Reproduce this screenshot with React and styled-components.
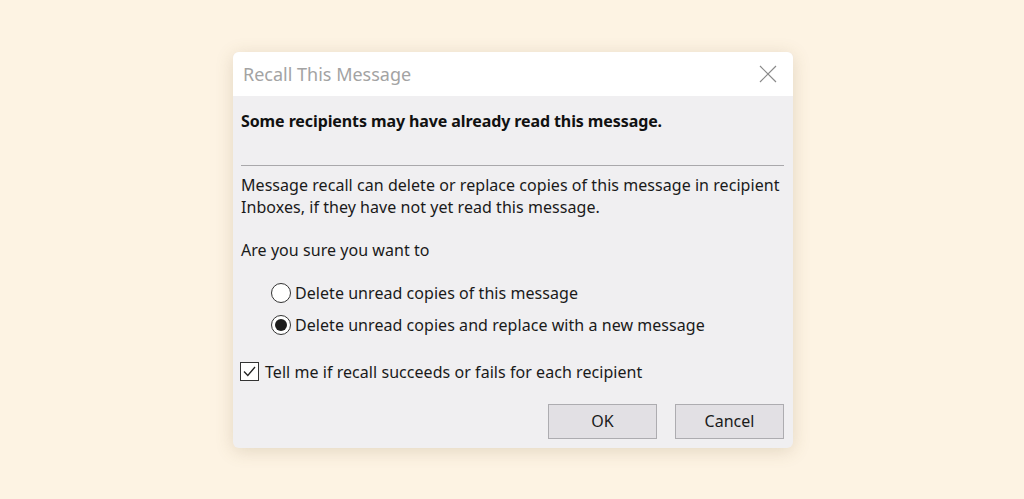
import styled, { createGlobalStyle } from "styled-components";

const GlobalStyle = createGlobalStyle`
  html, body {
    margin: 0;
    padding: 0;
    background: #fdf3e3;
  }
  * {
    box-sizing: border-box;
  }
`;

const Page = styled.div`
  width: 100%;
  height: 100vh;
  display: flex;
  align-items: center;
  justify-content: center;
  font-family: "Noto Sans", "Open Sans", sans-serif;
  color: #1a1a1a;
`;

const Dialog = styled.div`
  width: 560px;
  height: 396px;
  margin-left: 2px;
  border-radius: 6px;
  background: #f0eff1;
  box-shadow: 0 3px 18px rgba(120, 100, 60, 0.2);
  overflow: hidden;
  display: flex;
  flex-direction: column;
`;

const TitleBar = styled.div`
  height: 44px;
  background: #ffffff;
  display: flex;
  align-items: center;
  justify-content: space-between;
  padding: 0 16px 0 10px;
`;

const Title = styled.div`
  font-size: 18px;
  color: #a3a3a3;
`;

const CloseButton = styled.button`
  border: none;
  background: none;
  padding: 0;
  width: 18px;
  height: 18px;
  display: flex;
  cursor: pointer;
`;

const Body = styled.div`
  flex: 1;
  padding: 14px 9px 9px 8px;
  display: flex;
  flex-direction: column;
  font-size: 16px;
  letter-spacing: 0.05px;
`;

const Heading = styled.div`
  font-weight: 700;
  font-size: 16px;
  line-height: 22px;
  letter-spacing: -0.1px;
  color: #111;
`;

const Rule = styled.div`
  height: 1px;
  background: #a9a8ab;
  margin: 33px 0 8px;
`;

const Text = styled.p`
  margin: 0 0 ${(p) => p.$gap || 0}px;
  line-height: 22px;
`;

const Options = styled.div`
  display: flex;
  flex-direction: column;
  gap: 10px;
  padding-left: 30px;
  margin-top: 21px;
`;

const OptionRow = styled.label`
  display: flex;
  align-items: center;
  height: 22px;
  gap: 4px;
`;

const Radio = styled.span`
  width: 20px;
  height: 20px;
  border-radius: 50%;
  border: 1px solid #333;
  background: #fff;
  display: flex;
  align-items: center;
  justify-content: center;
  &::after {
    content: "";
    width: 12px;
    height: 12px;
    border-radius: 50%;
    background: #1c1c1c;
    display: ${(p) => (p.$checked ? "block" : "none")};
  }
`;

const CheckRow = styled.label`
  display: flex;
  align-items: center;
  height: 22px;
  gap: 6px;
  margin-top: 25px;
  margin-left: -1px;
`;

const Box = styled.span`
  width: 19px;
  height: 19px;
  border: 1px solid #333;
  background: #fff;
  display: flex;
  align-items: center;
  justify-content: center;
`;

const Buttons = styled.div`
  margin-top: auto;
  display: flex;
  justify-content: flex-end;
  gap: 18px;
`;

const Button = styled.button`
  width: 109px;
  height: 35px;
  background: #e2e0e4;
  border: 1px solid #adacb0;
  font-family: inherit;
  font-size: 16px;
  color: #1a1a1a;
  cursor: pointer;
`;

export default function App() {
  return (
    <>
      <GlobalStyle />
      <Page>
        <Dialog>
          <TitleBar>
            <Title>Recall This Message</Title>
            <CloseButton aria-label="Close">
              <svg width="18" height="18" viewBox="0 0 18 18">
                <path d="M1 1 L17 17 M17 1 L1 17" stroke="#8a8a8a" strokeWidth="1.2" />
              </svg>
            </CloseButton>
          </TitleBar>
          <Body>
            <Heading>Some recipients may have already read this message.</Heading>
            <Rule />
            <Text $gap={21}>
              Message recall can delete or replace copies of this message in recipient
              <br />
              Inboxes, if they have not yet read this message.
            </Text>
            <Text>Are you sure you want to</Text>
            <Options>
              <OptionRow>
                <Radio />
                Delete unread copies of this message
              </OptionRow>
              <OptionRow>
                <Radio $checked />
                Delete unread copies and replace with a new message
              </OptionRow>
            </Options>
            <CheckRow>
              <Box>
                <svg width="15" height="15" viewBox="0 0 15 15">
                  <path d="M2 7.5 L5.8 11.5 L13 3" fill="none" stroke="#222" strokeWidth="1.3" />
                </svg>
              </Box>
              Tell me if recall succeeds or fails for each recipient
            </CheckRow>
            <Buttons>
              <Button>OK</Button>
              <Button>Cancel</Button>
            </Buttons>
          </Body>
        </Dialog>
      </Page>
    </>
  );
}
